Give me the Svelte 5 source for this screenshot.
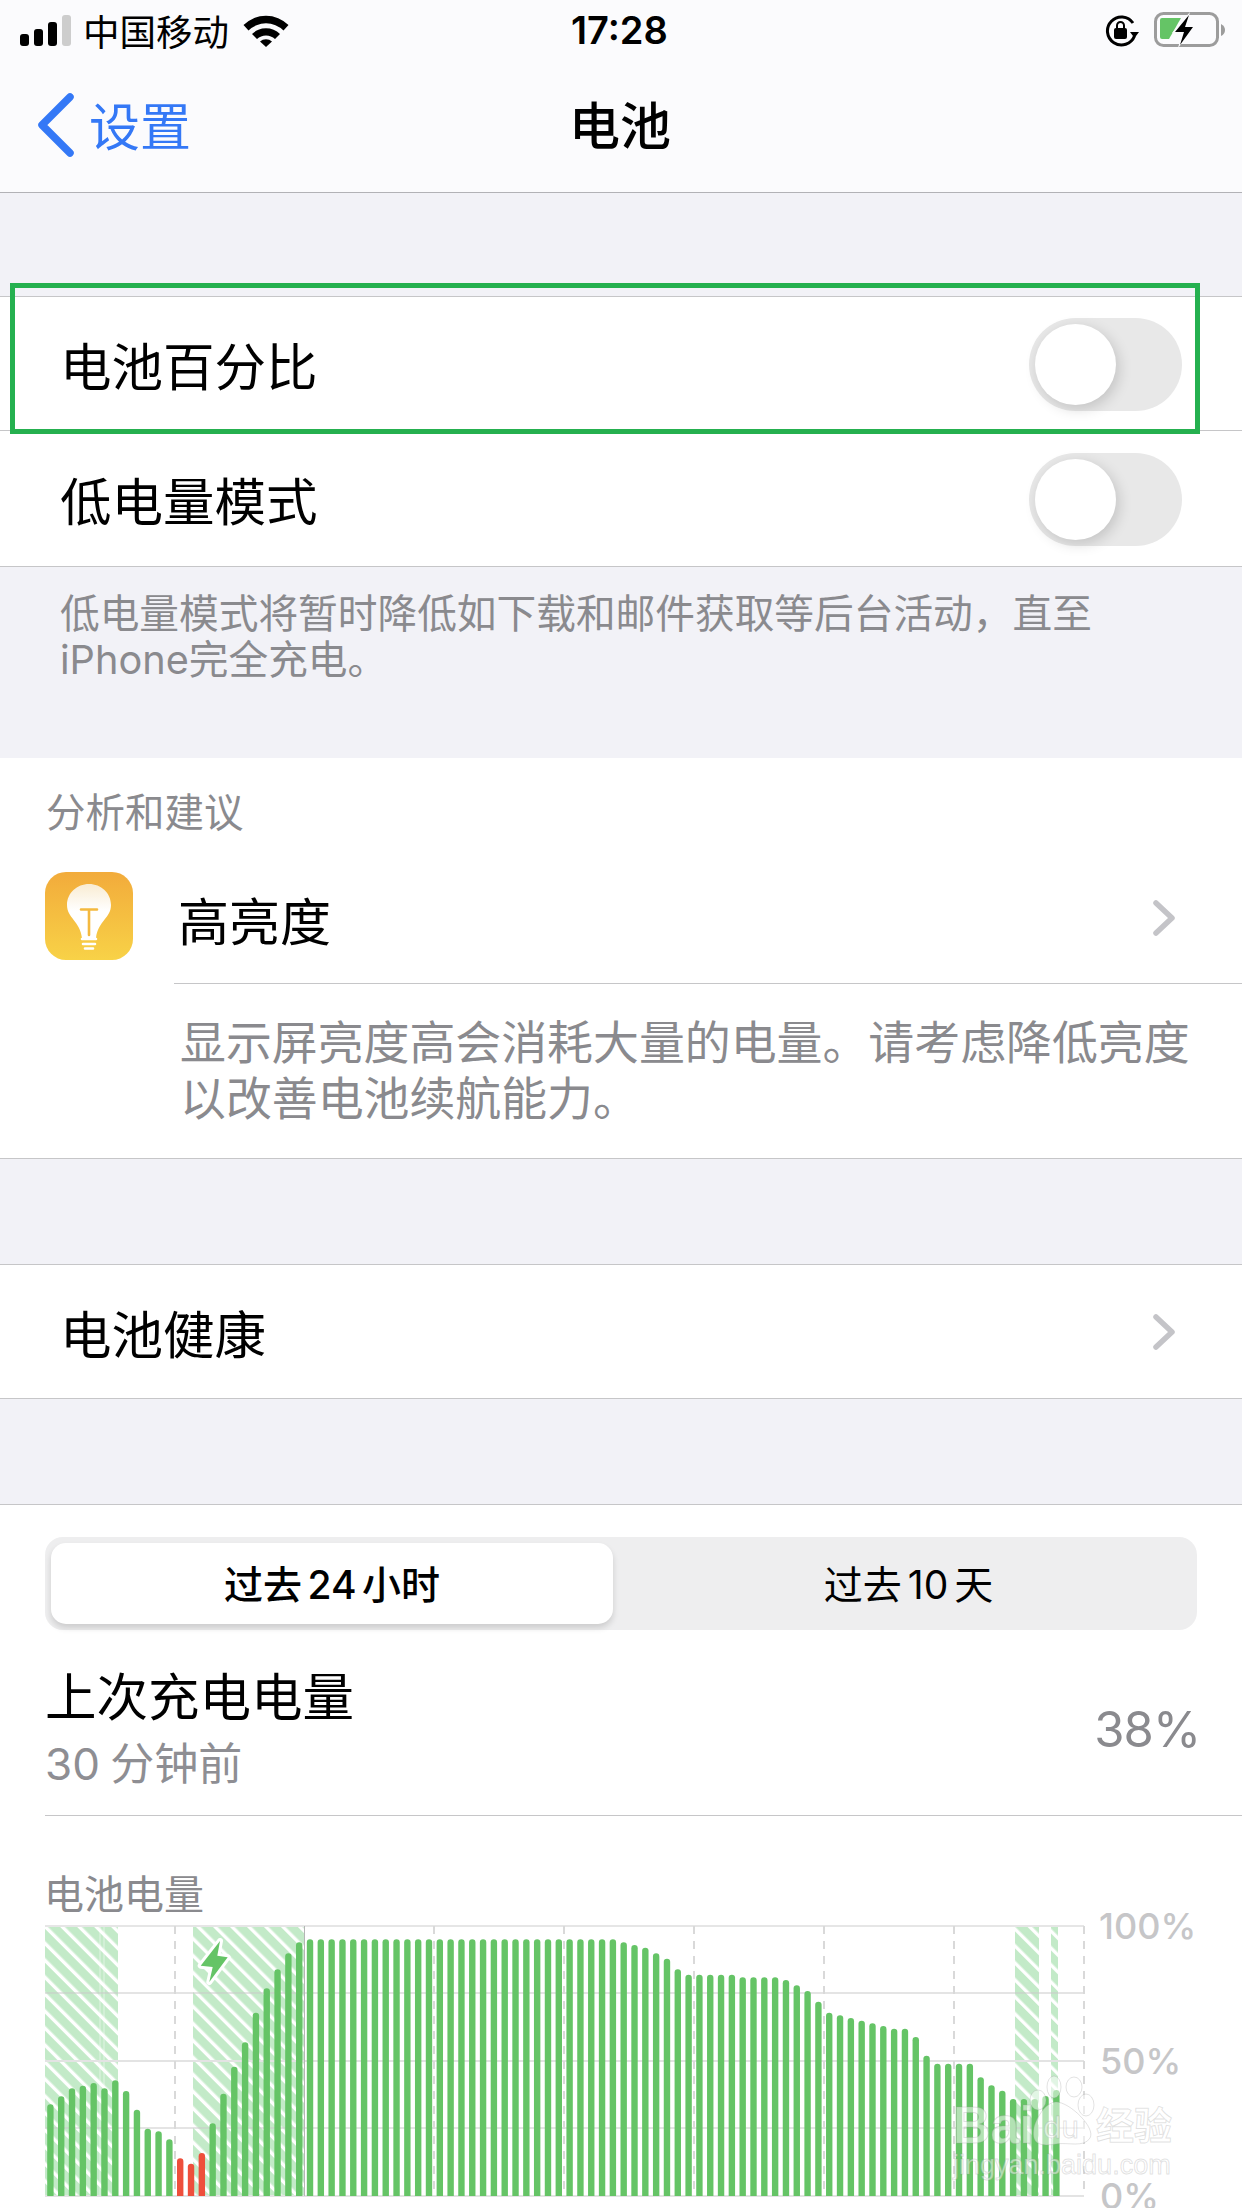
<script>
    // bar tops, read off the chart (3x zoom px, offset from y=1860)
    const tops = [733,709,685,677,669,685,661,693,749,806,814,838,895,911,879,790,701,620,547,458,385,328,280,247,
        ...Array(29).fill(238),
        247,255,263,280,296,328,344,344,344,344,344,352,352,352,352,360,376,393,425,458,466,474,482,490,498,506,506,531,587,611,611,611,611,652,676,692,717,717,717,708,690];

    const bars = tops.map((t, i) => ({
        x: 47.2 + i * 10.817,
        y: 1860 + t / 3,
        color: i >= 12 && i <= 14 ? '#ee4f3c' : '#65c466'
    }));

    const dashes = [175, 434, 564, 694, 824, 954, 1084];
    const hatches = [[45, 73], [193, 111], [1015, 24], [1051, 7]];
    const grid = [[1926, '#e6e6e6', 2], [1993, '#c9c9c9', 1], [2061, '#e3e3e3', 2], [2128, '#c9c9c9', 1], [2196, '#e3e3e3', 2]];
</script>

<div class="page">
    <header class="top">
        <div class="status">
            <svg class="signal" width="54" height="32" viewBox="0 0 54 32">
                <rect x="0" y="19" width="9" height="12" rx="3"/>
                <rect x="14" y="14" width="9" height="17" rx="3"/>
                <rect x="28" y="7" width="9" height="24" rx="3"/>
                <rect x="42" y="0" width="9" height="31" rx="3" fill="#cdcdcd"/>
            </svg>
            <span class="carrier">中国移动</span>
            <svg class="wifi" width="46" height="34" viewBox="0 0 46 34">
                <path d="M0.5 12 A32 32 0 0 1 45.5 12 L40.5 17.5 A25 25 0 0 0 5.5 17.5 Z"/>
                <path d="M9 21 A20 20 0 0 1 37 21 L32 26 A13 13 0 0 0 14 26 Z"/>
                <path d="M17 28.5 A9 9 0 0 1 29 28.5 L23 34 Z"/>
            </svg>
            <span class="time">17:28</span>
            <svg class="lock" width="34" height="32" viewBox="0 0 34 32">
                <path d="M28 8 A14 14 0 1 0 29.5 21" fill="none" stroke="#000" stroke-width="3"/>
                <path d="M25 17 H34 L29.5 23 Z"/>
                <rect x="9" y="13" width="13" height="11" rx="2"/>
                <path d="M12 14 V10.5 A3.5 3.5 0 0 1 19 10.5 V14" fill="none" stroke="#000" stroke-width="2"/>
            </svg>
            <svg class="battery" width="72" height="36" viewBox="0 0 72 36">
                <rect x="1.5" y="1.5" width="62" height="32" rx="8" fill="none" stroke="#9c9c9c" stroke-width="3"/>
                <path d="M67 12 Q71 14 71 18 Q71 22 67 24 Z" fill="#9c9c9c"/>
                <path d="M8 6 H27 L15 27 H8 Q6 27 6 25 V8 Q6 6 8 6 Z" fill="#65c466"/>
                <path d="M36 0 L18 21 H28 L24 36 L42 14 H32 Z" fill="#fbfbfd"/>
                <path d="M35 3 L21 20 H30 L26 33 L39 15 H31 Z"/>
            </svg>
        </div>
        <div class="nav">
            <div class="back">
                <svg width="40" height="66" viewBox="0 0 40 66">
                    <path d="M34 5 L6 33 L34 61" fill="none" stroke="#3478f6" stroke-width="7.5" stroke-linecap="round" stroke-linejoin="round"/>
                </svg>
                <span>设置</span>
            </div>
            <h1>电池</h1>
        </div>
    </header>

    <section class="group first">
        <div class="row">
            <span>电池百分比</span>
            <div class="toggle"><div class="knob"></div></div>
            <div class="highlight"></div>
        </div>
        <div class="row last">
            <span>低电量模式</span>
            <div class="toggle"><div class="knob"></div></div>
        </div>
    </section>
    <p class="note">低电量模式将暂时降低如下载和邮件获取等后台活动，直至<br/>iPhone完全充电。</p>

    <section class="advice">
        <div class="advice-title">分析和建议</div>
        <div class="advice-row">
            <svg class="bulb" width="88" height="88" viewBox="0 0 88 88">
                <defs>
                    <linearGradient id="tile" x1="0" y1="0" x2="0" y2="1">
                        <stop offset="0" stop-color="#f2ab3b"/>
                        <stop offset="1" stop-color="#f8d247"/>
                    </linearGradient>
                    <linearGradient id="glass" x1="0" y1="0" x2="0" y2="1">
                        <stop offset="0" stop-color="#f9ecd2"/>
                        <stop offset="0.5" stop-color="#ffffff"/>
                    </linearGradient>
                </defs>
                <rect width="88" height="88" rx="21" fill="url(#tile)"/>
                <path d="M44 12 C32 12 22 21 22 33 C22 46 35 49 37 66 H51 C53 49 66 46 66 33 C66 21 56 12 44 12 Z" fill="url(#glass)"/>
                <path d="M36 37.5 H52 M44 37.5 V63" stroke="#f4b93f" stroke-width="2.6" stroke-linecap="round" fill="none"/>
                <path d="M37 67 H51 M38 72 H50 M40 76.5 H48" stroke="#fff" stroke-width="2.6" stroke-linecap="round"/>
            </svg>
            <div class="advice-name">
                <span>高亮度</span>
                <svg class="chevron" width="26" height="36" viewBox="0 0 26 36"><path d="M4 3 L20 18 L4 33"/></svg>
            </div>
        </div>
        <p class="advice-text">显示屏亮度高会消耗大量的电量。请考虑降低亮度<br/>以改善电池续航能力。</p>
    </section>

    <section class="group health">
        <div class="row last">
            <span>电池健康</span>
            <svg class="chevron" width="26" height="36" viewBox="0 0 26 36"><path d="M4 3 L20 18 L4 33"/></svg>
        </div>
    </section>

    <section class="usage">
        <div class="segment">
            <div class="seg active">过去 24 小时</div>
            <div class="seg">过去 10 天</div>
        </div>
        <div class="charge">
            <div>
                <div class="charge-title">上次充电电量</div>
                <div class="charge-sub">30 分钟前</div>
            </div>
            <div class="charge-value">38%</div>
        </div>
        <div class="chart-title">电池电量</div>
        <svg class="chart" width="1242" height="306" viewBox="0 1902 1242 306">
            <defs>
                <pattern id="hatch" width="12" height="12" patternUnits="userSpaceOnUse" patternTransform="rotate(-45)">
                    <rect width="12" height="12" fill="#c3eac8"/>
                    <rect width="3.4" height="12" fill="#fff"/>
                </pattern>
                <clipPath id="plot"><rect x="45" y="1926" width="1040" height="270"/></clipPath>
            </defs>

            {#each hatches as h}
                <rect x={h[0]} y="1926" width={h[1]} height="270" fill="url(#hatch)"/>
            {/each}
            <line x1="100" x2="100" y1="1926" y2="2196" stroke="#fff" stroke-opacity="0.5"/>
            <line x1="104" x2="104" y1="1926" y2="2196" stroke="#fff" stroke-opacity="0.5"/>
            {#each grid as g}
                <line x1="45" x2="1084" y1={g[0]} y2={g[0]} stroke={g[1]} stroke-width={g[2]}/>
            {/each}
            {#each dashes as x}
                <line x1={x} x2={x} y1="1926" y2="2196" stroke="#d9d9d9" stroke-width="2" stroke-dasharray="8 7"/>
            {/each}
            <line x1="304.5" x2="304.5" y1="1926" y2="2196" stroke="#b5b5b5" stroke-width="1"/>

            <g clip-path="url(#plot)">
                {#each bars as b}
                    <rect x={b.x} y={b.y} width="6.4" height={2200 - b.y} rx="3.2" fill={b.color}/>
                {/each}
            </g>

            <path class="bolt" d="M220 1941 L200.7 1965.7 L212.7 1967 L209.3 1982 L227.7 1957.3 L217.3 1955.7 Z"/>

            <text class="axis" x="1099" y="1939">100%</text>
            <text class="axis" x="1100" y="2074">50%</text>
            <text class="axis" x="1100" y="2209">0%</text>

            <g class="mark">
                <ellipse cx="1054" cy="2087" rx="7" ry="11"/>
                <ellipse cx="1074" cy="2087" rx="8" ry="10"/>
                <ellipse cx="1086" cy="2105" rx="8" ry="11"/>
                <ellipse cx="1038" cy="2100" rx="8" ry="10"/>
                <path d="M1056 2102 C1070 2102 1096 2128 1090 2138 C1084 2148 1068 2142 1056 2144 C1042 2146 1031 2146 1034 2128 C1036 2118 1046 2102 1056 2102 Z"/>
                <text class="mark-big" x="953" y="2143">Bai</text>
                <text class="mark-du" x="1043" y="2138">du</text>
                <text class="mark-cn" x="1096" y="2139">经验</text>
                <text class="mark-url" x="953" y="2174">jingyan.baidu.com</text>
            </g>
        </svg>
    </section>
</div>

<style>
    :global(body) {
        margin: 0;
        background: #f2f2f7;
    }

    .page {
        width: 1242px;
        height: 2208px;
        overflow: hidden;
        background: #f2f2f7;
        color: #000;
        font-family: Inter, "Noto Sans CJK SC", sans-serif;
    }

    .top {
        height: 193px;
        box-sizing: border-box;
        background: #fbfbfd;
        border-bottom: 1px solid #b2b2b6;
    }

    .status {
        display: flex;
        align-items: center;
        height: 60px;
        padding-left: 20px;
        position: relative;
    }

    .signal {
        margin-right: 9px;
        margin-top: 1px;
    }

    .carrier {
        font-size: 36.5px;
        margin-right: 14px;
    }

    .wifi {
        margin-top: -1px;
    }

    .time {
        font-size: 38px;
        font-weight: 600;
        margin-left: 282px;
        margin-right: 437px;
    }

    .lock {
        margin: 2px 15px 0 0;
    }

    .nav {
        display: flex;
        align-items: center;
        justify-content: center;
        height: 132px;
        position: relative;
    }

    .back {
        position: absolute;
        left: 36px;
        top: 0;
        height: 128px;
        display: flex;
        align-items: center;
        gap: 13px;
        color: #3478f6;
        font-size: 51px;
    }

    .back svg {
        margin-top: 2px;
    }

    h1 {
        margin: 0 2px 7px 0;
        font-size: 51px;
        font-weight: 500;
    }

    .group {
        background: #fff;
        border-top: 1px solid #c6c6c8;
        border-bottom: 1px solid #c6c6c8;
    }

    .first {
        margin-top: 103px;
    }

    .health {
        margin-top: 105px;
    }

    .row {
        height: 134px;
        box-sizing: border-box;
        display: flex;
        align-items: center;
        justify-content: space-between;
        padding: 0 60px 0 60px;
        font-size: 51.5px;
        position: relative;
        border-bottom: 1px solid #c6c6c8;
    }

    .row.last {
        border-bottom: none;
        height: 135px;
    }

    .health .row {
        padding-right: 64px;
        height: 133px;
    }

    .highlight {
        position: absolute;
        left: 10px;
        top: -14px;
        width: 1190px;
        height: 151px;
        box-sizing: border-box;
        border: 5px solid #25b04f;
    }

    .toggle {
        width: 153px;
        height: 93px;
        margin-top: 1px;
        border-radius: 47px;
        background: #e8e8e8;
        padding: 6px;
        box-sizing: border-box;
    }

    .knob {
        width: 81px;
        height: 81px;
        border-radius: 50%;
        background: #fff;
        box-shadow: 3px 4px 14px rgba(0, 0, 0, 0.16);
    }

    .note {
        margin: 0;
        height: 191px;
        box-sizing: border-box;
        padding: 24px 0 0 60px;
        font-size: 39.7px;
        line-height: 46px;
        color: #8a8a8e;
    }

    .advice {
        background: #fff;
        height: 401px;
        box-sizing: border-box;
        border-bottom: 1px solid #c6c6c8;
    }

    .advice-title {
        padding: 31px 0 0 46px;
        height: 84px;
        box-sizing: border-box;
        font-size: 39.5px;
        line-height: 48px;
        color: #8a8a8e;
    }

    .advice-row {
        display: flex;
        align-items: flex-start;
        padding-left: 45px;
        padding-top: 30px;
        height: 141px;
        box-sizing: border-box;
    }

    .advice-name {
        flex: 1;
        height: 112px;
        box-sizing: border-box;
        margin-left: 41px;
        padding: 0 64px 18px 4px;
        display: flex;
        align-items: center;
        justify-content: space-between;
        font-size: 51px;
        border-bottom: 1px solid #c6c6c8;
    }

    .advice-name .chevron {
        margin-top: -1px;
    }

    .chevron {
        fill: none;
        stroke: #c4c4c8;
        stroke-width: 5.5;
        stroke-linecap: round;
        stroke-linejoin: round;
        display: block;
    }

    .advice-text {
        margin: 0;
        padding: 32px 0 0 180px;
        font-size: 45.9px;
        line-height: 56px;
        color: #8a8a8e;
    }

    .usage {
        margin-top: 105px;
        background: #fff;
        border-top: 1px solid #c6c6c8;
        height: 704px;
        box-sizing: border-box;
        padding-top: 32px;
    }

    .segment {
        margin: 0 45px;
        height: 93px;
        padding: 6px;
        box-sizing: border-box;
        border-radius: 18px;
        background: #eeeeef;
        display: flex;
    }

    .seg {
        flex: 1;
        display: flex;
        align-items: center;
        justify-content: center;
        font-size: 39px;
        font-weight: 400;
        word-spacing: -5px;
        padding: 0 0 3px 13px;
    }

    .seg.active {
        flex: none;
        width: 562px;
        padding-left: 0;
        background: #fff;
        border-radius: 15px;
        box-shadow: 0 4px 6px rgba(0, 0, 0, 0.14);
        font-weight: 500;
    }

    .charge {
        margin-left: 45px;
        padding: 35px 42px 0 0;
        height: 186px;
        box-sizing: border-box;
        display: flex;
        justify-content: space-between;
        align-items: flex-start;
        border-bottom: 1px solid #c6c6c8;
    }

    .charge-title {
        font-size: 51.5px;
        line-height: 64px;
        margin-bottom: 7px;
    }

    .charge-sub {
        font-size: 44px;
        line-height: 56px;
        word-spacing: -2px;
        color: #8e8e93;
    }

    .charge-value {
        font-size: 49px;
        line-height: 60px;
        letter-spacing: -1px;
        color: #8a8a8e;
        margin-top: 35px;
    }

    .chart-title {
        margin: 56px 0 0 44px;
        font-size: 40px;
        line-height: 46px;
        color: #8a8a8e;
    }

    .chart {
        display: block;
        margin-top: -16px;
    }

    .bolt {
        fill: #65c466;
        stroke: #fff;
        stroke-width: 6;
        stroke-linejoin: round;
        paint-order: stroke;
    }

    .axis {
        font-size: 36px;
        font-weight: 500;
        fill: #c6c6c8;
    }

    .mark {
        fill: rgba(255, 255, 255, 0.5);
        stroke: rgba(150, 150, 150, 0.28);
        stroke-width: 1;
    }

    .mark-big {
        font-family: "Liberation Sans", sans-serif;
        font-size: 52px;
        font-weight: 700;
    }

    .mark-du {
        font-size: 30px;
    }

    .mark-cn {
        font-size: 38px;
        font-weight: 700;
    }

    .mark-url {
        font-family: "Liberation Sans", sans-serif;
        font-size: 27px;
    }
</style>
